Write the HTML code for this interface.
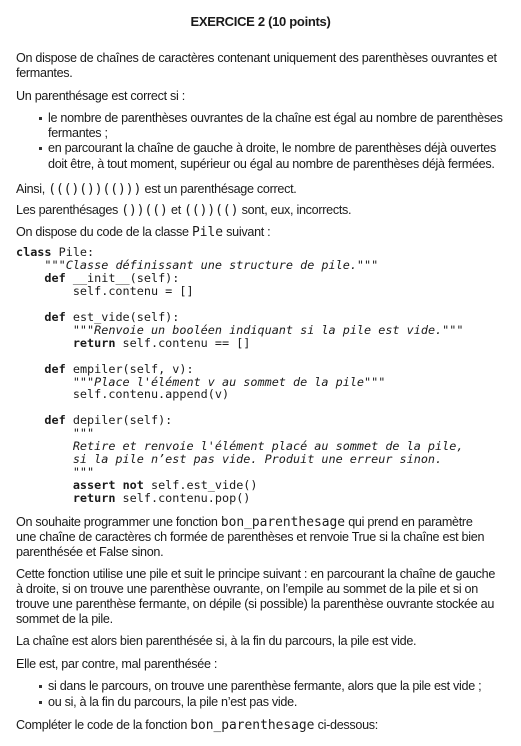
<!DOCTYPE html>
<html><head><meta charset="utf-8"><style>
body{margin:0;width:521px;height:746px;background:#fff;position:relative;overflow:hidden;color:#1a1a1a}
.t{position:absolute;left:16px;white-space:nowrap;font-family:"Liberation Sans",sans-serif;font-size:12.6px;letter-spacing:-0.3px;line-height:16px}
.b{left:48px}
.b:before{content:"";position:absolute;left:-9px;top:7px;width:3px;height:3px;background:#333}
.m{font-family:"DejaVu Sans Mono",monospace;font-size:12.9px;letter-spacing:0}
.c{position:absolute;white-space:pre;font-family:"DejaVu Sans Mono",monospace;font-size:11.8px;line-height:12.95px;color:#1a1a1a}
.c b{font-weight:bold}
.c i{font-style:oblique}
</style></head><body>
<div class="t" style="left:0;width:521px;text-align:center;top:14px;font-weight:bold;font-size:13px">EXERCICE 2 (10 points)</div>
<div class="t" style="top:50px">On dispose de chaînes de caractères contenant uniquement des parenthèses ouvrantes et</div>
<div class="t" style="top:65px">fermantes.</div>
<div class="t" style="top:88px">Un parenthésage est correct si :</div>
<div class="t b" style="top:110px">le nombre de parenthèses ouvrantes de la chaîne est égal au nombre de parenthèses</div>
<div class="t" style="left:48px;top:125px">fermantes ;</div>
<div class="t b" style="top:140px">en parcourant la chaîne de gauche à droite, le nombre de parenthèses déjà ouvertes</div>
<div class="t" style="left:48px;top:156px">doit être, à tout moment, supérieur ou égal au nombre de parenthèses déjà fermées.</div>
<div class="t" style="top:181px">Ainsi, <span class="m">((()())(()))</span> est un parenthésage correct.</div>
<div class="t" style="top:202px">Les parenthésages <span class="m">())(()</span> et <span class="m">(())(()</span> sont, eux, incorrects.</div>
<div class="t" style="top:224px">On dispose du code de la classe <span class="m">Pile</span> suivant :</div>
<div class="c" style="left:16px;top:246px"><b>class</b> Pile:
    <i>"""Classe définissant une structure de pile."""</i>
    <b>def</b> __init__(self):
        self.contenu = []

    <b>def</b> est_vide(self):
        <i>"""Renvoie un booléen indiquant si la pile est vide."""</i>
        <b>return</b> self.contenu == []

    <b>def</b> empiler(self, v):
        <i>"""Place l'élément v au sommet de la pile"""</i>
        self.contenu.append(v)

    <b>def</b> depiler(self):
        <i>"""
        Retire et renvoie l'élément placé au sommet de la pile,
        si la pile n’est pas vide. Produit une erreur sinon.
        """</i>
        <b>assert</b> <b>not</b> self.est_vide()
        <b>return</b> self.contenu.pop()</div>
<div class="t" style="top:514px">On souhaite programmer une fonction <span class="m">bon_parenthesage</span> qui prend en paramètre</div>
<div class="t" style="top:529px">une chaîne de caractères ch formée de parenthèses et renvoie True si la chaîne est bien</div>
<div class="t" style="top:544px">parenthésée et False sinon.</div>
<div class="t" style="top:566px">Cette fonction utilise une pile et suit le principe suivant : en parcourant la chaîne de gauche</div>
<div class="t" style="top:581px">à droite, si on trouve une parenthèse ouvrante, on l’empile au sommet de la pile et si on</div>
<div class="t" style="top:596px">trouve une parenthèse fermante, on dépile (si possible) la parenthèse ouvrante stockée au</div>
<div class="t" style="top:611px">sommet de la pile.</div>
<div class="t" style="top:633px">La chaîne est alors bien parenthésée si, à la fin du parcours, la pile est vide.</div>
<div class="t" style="top:656px">Elle est, par contre, mal parenthésée :</div>
<div class="t b" style="top:678px">si dans le parcours, on trouve une parenthèse fermante, alors que la pile est vide ;</div>
<div class="t b" style="top:694px">ou si, à la fin du parcours, la pile n’est pas vide.</div>
<div class="t" style="top:717px">Compléter le code de la fonction <span class="m">bon_parenthesage</span> ci-dessous:</div>
</body></html>
